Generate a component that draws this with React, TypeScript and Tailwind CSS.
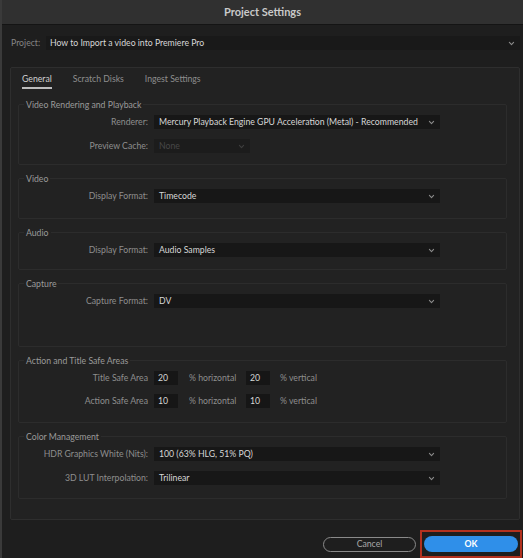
import type { ReactNode } from "react";

function Chevron({ className = "text-[#8a8a8a]" }: { className?: string }) {
  return (
    <svg className={`h-[7px] w-[7px] ${className}`} viewBox="0 0 10 10" fill="none" stroke="currentColor" strokeWidth={1.6}>
      <path d="M2 3.5l3 3 3-3" strokeLinecap="round" strokeLinejoin="round" />
    </svg>
  );
}

function Select({ value, width = "w-[286px]", disabled = false }: { value: string; width?: string; disabled?: boolean }) {
  return (
    <div
      className={`flex h-[14px] items-center justify-between pl-[5px] pr-[5px] ${width} ${
        disabled ? "bg-[#1c1c1c] text-[#474747]" : "bg-[#171717] text-[#d6d6d6]"
      }`}
    >
      <span className="whitespace-nowrap">{value}</span>
      <Chevron className={disabled ? "text-[#3e3e3e]" : "text-[#8a8a8a]"} />
    </div>
  );
}

function Row({ label, children }: { label: string; children: ReactNode }) {
  return (
    <div className="flex h-[14px] items-center">
      <div className="w-[130px] whitespace-nowrap pr-[1px] text-right text-[#8e8e8e]">{label}</div>
      <div className="ml-[5px] flex items-center">{children}</div>
    </div>
  );
}

function Section({ title, children, pb = "pb-[11px]", gap = "gap-[10px]" }: { title: string; children: ReactNode; pb?: string; gap?: string }) {
  return (
    <div className={`rounded-[2px] border border-[#2c2c2c] ${pb}`}>
      <span className="-mt-[6px] ml-[5px] block w-fit bg-[#222222] px-[2px] leading-[12px] text-[#9a9a9a]">{title}</span>
      <div className={`mt-[4px] flex flex-col ${gap}`}>{children}</div>
    </div>
  );
}

function NumBox({ value }: { value: string }) {
  return <div className="flex h-[14px] w-[24px] items-center bg-[#161616] pl-[4px] text-[#d6d6d6]">{value}</div>;
}

function SafeRow({ label, v }: { label: string; v: string }) {
  return (
    <Row label={label}>
      <NumBox value={v} />
      <span className="ml-[11px] w-[48px] whitespace-nowrap text-[#8e8e8e]">% horizontal</span>
      <div className="ml-[9px]">
        <NumBox value={v} />
      </div>
      <span className="ml-[10px] whitespace-nowrap text-[#8e8e8e]">% vertical</span>
    </Row>
  );
}

export default function App() {
  return (
    <div
      className="flex h-[558px] w-[523px] flex-col border-l-2 border-[#3a3a3a] bg-[#1e1e1e] text-[8.7px] leading-[12px]"
      style={{ fontFamily: "Lato, 'Liberation Sans', sans-serif" }}
    >
      {/* Title bar */}
      <div className="flex h-[25px] items-center justify-center border-b border-[#141414] bg-[#303030] text-[11px] font-bold text-[#c9c9c9]">
        Project Settings
      </div>

      {/* Project */}
      <div className="mt-[11px] flex items-center pr-[3px]">
        <span className="ml-[9px] w-[35px] text-[#858585]">Project:</span>
        <div className="flex h-[14px] flex-1 items-center justify-between bg-[#191919] pl-[4px] pr-[5px] text-[#d6d6d6]">
          <span>How to Import a video into Premiere Pro</span>
          <Chevron />
        </div>
      </div>

      {/* Tabs panel */}
      <div className="mr-[3px] ml-[8px] mt-[17px] flex h-[453px] flex-col rounded-[2px] border border-[#2e2e2e] bg-[#222222] pl-[7px] pr-[12px]">
        <div className="ml-[4px] mt-[5px] flex gap-[21px] text-[#8e8e8e]">
          <div className="flex flex-col">
            <span className="text-[#d0d0d0]">General</span>
            <span className="mt-[2px] h-[2px] bg-[#bdbdbd]" />
          </div>
          <span>Scratch Disks</span>
          <span>Ingest Settings</span>
        </div>

        <div className="mt-[15px] flex flex-col gap-[13px]">
          <Section title="Video Rendering and Playback">
            <Row label="Renderer:">
              <Select value="Mercury Playback Engine GPU Acceleration (Metal) - Recommended" />
            </Row>
            <Row label="Preview Cache:">
              <Select value="None" width="w-[96px]" disabled />
            </Row>
          </Section>

          <Section title="Video" pb="pb-[15px]">
            <Row label="Display Format:">
              <Select value="Timecode" />
            </Row>
          </Section>

          <Section title="Audio" pb="pb-[12px]">
            <Row label="Display Format:">
              <Select value="Audio Samples" />
            </Row>
          </Section>

          <Section title="Capture" pb="pb-[38px]">
            <Row label="Capture Format:">
              <Select value="DV" />
            </Row>
          </Section>

          <Section title="Action and Title Safe Areas" pb="pb-[14px]" gap="gap-[9px]">
            <SafeRow label="Title Safe Area" v="20" />
            <SafeRow label="Action Safe Area" v="10" />
          </Section>

          <Section title="Color Management" pb="pb-[13px]">
            <Row label="HDR Graphics White (Nits):">
              <Select value="100 (63% HLG, 51% PQ)" />
            </Row>
            <Row label="3D LUT Interpolation:">
              <Select value="Trilinear" />
            </Row>
          </Section>
        </div>
      </div>

      {/* Buttons */}
      <div className="mt-[10px] flex items-center justify-end pr-[1px]">
        <button className="flex h-[15px] w-[93px] items-center justify-center rounded-full border border-[#8a8a8a] text-[#a8a8a8]">
          Cancel
        </button>
        <div className="ml-[4px] border-2 border-[#b3311f] px-[2px] pt-[4px] pb-[4px]">
          <button className="flex h-[16px] w-[94px] items-center justify-center rounded-full bg-[#2f8fe9] font-bold text-white">
            OK
          </button>
        </div>
      </div>
    </div>
  );
}
